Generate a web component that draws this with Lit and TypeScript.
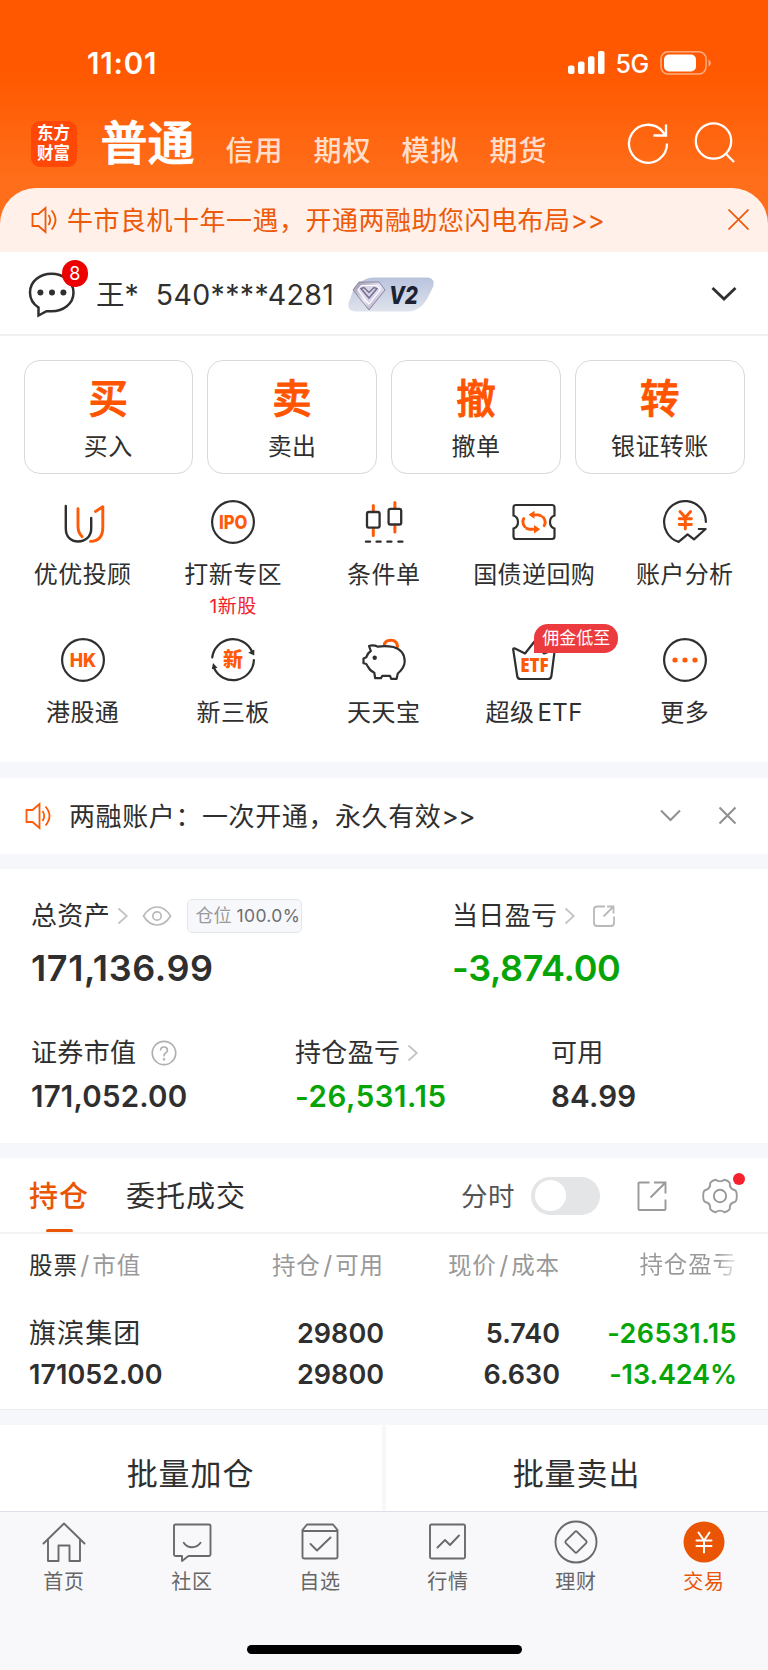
import { LitElement, html, css, svg } from "lit";
import { customElement, property, state } from "lit/decorators.js";
import { classMap } from "lit/directives/class-map.js";

const DARK = "#2f2f2f";
const ORANGE = "#ff5a08";

const glyphs: Record<string, unknown> = {
  youyou: svg`
    <g fill="none" stroke-width="2.4" stroke-linecap="round">
      <path stroke=${DARK} d="M4.8 6V28.5C4.8 37 10 41.500 17 41.500S30.200 37 30.200 28.500V18"/>
      <path stroke=${ORANGE} stroke-width="2.900" d="M17 8.600V26.500Q17 32.500 21 36.600"/>
      <path stroke=${ORANGE} stroke-width="2.900" stroke-linejoin="round" d="M34.500 11.500L41.800 6.800V27.500Q41.800 40.800 29.500 41.400"/>
    </g>`,
  ipo: svg`
    <circle cx="22" cy="22" r="20.9" fill="none" stroke=${DARK} stroke-width="2.200"/>
    <text class="g" x="22.200" y="28.800" font-size="18.500" font-weight="800" textLength="28.500" lengthAdjust="spacingAndGlyphs">IPO</text>`,
  candles: svg`
    <g fill="none" stroke-linecap="round">
      <path stroke=${ORANGE} stroke-width="3" d="M11.300 5.500V11M11.300 29.500V35.500M32.900 2.500V8M32.900 26.500V32"/>
      <rect x="5" y="12" width="12.600" height="15.600" rx="1.800" stroke=${DARK} stroke-width="2.300"/>
      <rect x="26.600" y="8.900" width="12.600" height="15.600" rx="1.800" stroke=${DARK} stroke-width="2.300"/>
      <path stroke=${DARK} stroke-width="2.400" d="M4 41.600h4M14.600 41.600h4M25.400 41.600h4M36.400 41.600h4"/>
    </g>`,
  ticket: svg`
    <path fill="none" stroke=${DARK} stroke-width="2.200" d="M4 5H40Q42.500 5 42.500 7.500V15.500Q38 17 38 22T42.500 28.500V36.500Q42.500 39 40 39H4Q1.500 39 1.500 36.500V28.500Q6 27 6 22T1.500 15.500V7.500Q1.500 5 4 5Z"/>
    <g fill="none" stroke=${ORANGE} stroke-width="2.900" stroke-linecap="round">
      <path d="M12.600 26.500Q9.600 22 11.800 18.600M21 29.300H17.500L14.600 28.300M31.400 17.500Q34.600 22 32.200 25.600M22 14.900H26.500L29.300 16"/>
    </g>
    <path fill=${ORANGE} d="M22.500 10.800V18.800L16.500 14.800ZM22 25V33.400L28.200 29.200Z"/>`,
  yuan: svg`
    <path fill="none" stroke=${DARK} stroke-width="2.200" stroke-linecap="round" stroke-linejoin="round" d="M42.900 22A20.900 20.900 0 1 0 15.600 41.900L24.600 34.300L31 39.400L42.600 29H35.800"/>
    <path fill="none" stroke=${ORANGE} stroke-width="2.900" stroke-linecap="round" d="M17 11.500L22.300 17.500L27.600 11.500M16.200 18.700H28.400M16.200 24.500H28.400M22.300 18V29"/>`,
  hk: svg`
    <circle cx="22" cy="22" r="20.900" fill="none" stroke=${DARK} stroke-width="2.200"/>
    <text class="g" x="22" y="28.600" font-size="18.500" font-weight="800" textLength="26.500" lengthAdjust="spacingAndGlyphs">HK</text>`,
  xin: svg`
    <path fill="none" stroke=${DARK} stroke-width="2.200" stroke-linecap="round" d="M1.200 19.500A20.900 20.900 0 0 1 41 13.500M42.900 22A20.900 20.900 0 0 1 2.800 29.500"/>
    <path fill=${DARK} d="M43.300 11.500V17.500L37.200 14.800ZM.8 31.300L2 25L6.500 29.800Z"/>
    <text class="g" x="22" y="29.400" font-size="20" font-weight="800">新</text>`,
  pig: svg`
    <path fill="none" stroke=${ORANGE} stroke-width="3" stroke-linecap="round" d="M22.300 7.500Q22.600 2.200 28.800 2.200T35.600 8.500"/>
    <path fill="#fff" stroke=${DARK} stroke-width="2.200" stroke-linejoin="round" d="M7 8Q11 6.500 16 8.700Q23 7.500 31.500 9Q42.500 12 42.700 23.500Q42.500 30 35.800 35.500L34.600 40.800H29.200L28 37.800H20.300L19 40.200H13.200L12.300 34.700Q8 33 6 28.800L4.300 26L1.500 25.300V20.600L4.300 19.200Q5.500 15 8.800 13Z"/>
    <circle cx="12.700" cy="19.700" r="2.200" fill=${DARK}/>`,
  etf: svg`
    <path fill="none" stroke=${DARK} stroke-width="2.200" stroke-linejoin="round" d="M1.200 11.500L5.200 38Q5.600 41 8.500 41H36Q39 41 39.400 38L42.800 11.500L32 15.500L22.500 3.500L13 15.500L3 10.500Q1 9.800 1.200 11.500Z"/>
    <text class="g narrow" x="22.400" y="33.500" font-size="19.500" font-weight="800" textLength="28.500" lengthAdjust="spacingAndGlyphs">ETF</text>`,
  more: svg`
    <circle cx="22" cy="22" r="20.900" fill="none" stroke=${DARK} stroke-width="2.200"/>
    <g fill=${ORANGE}><circle cx="12" cy="22" r="2.600"/><circle cx="22" cy="22" r="2.600"/><circle cx="32" cy="22" r="2.600"/></g>`,
};

const tabGlyphs: Record<string, unknown> = {
  home: svg`<path d="M1.500 23.500L22 3.500L42.500 23.500M6 20V41H16.500V25.500H27.500V41H38V20"/>`,
  community: svg`<path d="M5.500 4.500H39Q40.500 4.500 40.500 6V34.500Q40.500 36 39 36H18.500L12 41V36H5.500Q4 36 4 34.500V6Q4 4.500 5.500 4.500ZM13.800 22.800Q16.500 27.300 22 27.300T30.500 22.800"/>`,
  watch: svg`<path d="M9 4.500H35L39.500 10V37Q39.500 38.500 38 38.500H6Q4.500 38.500 4.500 37V10ZM4.500 11H39.500M12.500 24L19 30.500L32.500 17.500"/>`,
  market: svg`<path d="M5.500 4.500H37.500Q39 4.500 39 6V37Q39 38.500 37.500 38.500H5.500Q4 38.500 4 37V6Q4 4.500 5.500 4.500ZM11.500 27.500L19 20L24 25L33 15.500"/>`,
  wealth: svg`<circle cx="22" cy="22" r="20.500"/><path d="M20.900 11.800Q22 10.800 23.100 11.800L32.200 20.900Q33.200 22 32.200 23.100L23.100 32.200Q22 33.200 20.900 32.200L11.800 23.100Q10.800 22 11.800 20.900Z"/>`,
  trade: svg`<circle cx="22" cy="22" r="20.500" fill="#ea5504" stroke="none"/><path stroke="#fff" stroke-width="2" d="M16.500 12.500L22 20.500L27.500 12.500M14.500 20.500H29.500M14.500 26H29.500M22 20.500V32.500"/>`,
};

const speaker = (color: string) => html`
  <svg class="speaker" width="27" height="28" viewBox="0 0 27 28" fill="none" stroke=${color} stroke-width="1.800">
    <path d="M1.500 8H7.500L14.500 2V26L7.500 20H1.500ZM17.500 9Q21 14 17.500 19M20.500 4.500Q28.500 14 20.500 23.500"/>
  </svg>`;

const smallArrow = html`
  <svg class="arrow" width="12" height="18" viewBox="0 0 12 18" fill="none" stroke="#c2c2c2" stroke-width="1.700"><path d="M1.500 1.500L9.800 9L1.500 16.500"/></svg>`;

@customElement("grid-entry")
export class GridEntry extends LitElement {
  @property() icon = "";
  @property() label = "";
  @property() note = "";
  @property() badge = "";

  static styles = css`
    :host { display: flex; flex-direction: column; align-items: center; }
    .pic { position: relative; height: 44px; }
    svg { display: block; overflow: visible; }
    .g { fill: #ff5a08; text-anchor: middle; font-family: Inter, "Noto Sans CJK SC", sans-serif; }
    .g.narrow { font-family: "Open Sans", sans-serif; }
    .label { margin-top: 16px; height: 30px; line-height: 30px; font-size: 24px; letter-spacing: 0.4px; word-spacing: -4px; white-space: nowrap; }
    .note { height: 24px; line-height: 24px; margin-top: 5px; font-size: 19px; color: #f2222c; letter-spacing: 0.6px; }
    .badge { position: absolute; left: 22px; top: -14px; width: 84px; height: 28.500px; line-height: 28px; border-radius: 14px 14px 14px 0; background: #ec3b3f; color: #fff; font-size: 17px; text-align: center; white-space: nowrap; }
  `;

  render() {
    return html`
      <div class="pic">
        <svg width="44" height="44" viewBox="0 0 44 44">${glyphs[this.icon]}</svg>
        ${this.badge ? html`<div class="badge">${this.badge}</div>` : ""}
      </div>
      <div class="label">${this.label}</div>
      ${this.note ? html`<div class="note">${this.note}</div>` : ""}
    `;
  }
}

@customElement("app-root")
export class AppRoot extends LitElement {
  @state() private market = "普通";
  @state() private tab = "持仓";
  @state() private nav = "交易";

  private actions = [["买", "买入"], ["卖", "卖出"], ["撤", "撤单"], ["转", "银证转账"]];
  private entries = [
    [
      { icon: "youyou", label: "优优投顾" },
      { icon: "ipo", label: "打新专区", note: "1新股" },
      { icon: "candles", label: "条件单" },
      { icon: "ticket", label: "国债逆回购" },
      { icon: "yuan", label: "账户分析" },
    ],
    [
      { icon: "hk", label: "港股通" },
      { icon: "xin", label: "新三板" },
      { icon: "pig", label: "天天宝" },
      { icon: "etf", label: "超级 ETF", badge: "佣金低至" },
      { icon: "more", label: "更多" },
    ],
  ] as { icon: string; label: string; note?: string; badge?: string }[][];
  private navItems = [
    ["home", "首页"], ["community", "社区"], ["watch", "自选"],
    ["market", "行情"], ["wealth", "理财"], ["trade", "交易"],
  ];

  static styles = css`
    :host { display: block; width: 768px; height: 1670px; overflow: hidden; background: #fff; color: #2f2f2f; font-family: Inter, "Noto Sans CJK SC", sans-serif; }
    * { box-sizing: border-box; }
    svg { display: block; flex: none; }
    .top { height: 252px; background: linear-gradient(#ff5800 0, #ff5800 70px, #ff6e1a 180px); display: flex; flex-direction: column; }
    .status { height: 74px; padding: 51px 57px 0 87px; display: flex; justify-content: space-between; align-items: flex-start; color: #fff; }
    .time { font-size: 29.500px; font-weight: 600; line-height: 24px; letter-spacing: 0.800px; }
    .signals { display: flex; height: 24px; align-items: center; }
    .net { font-size: 25px; font-weight: 500; line-height: 24px; margin: 1px 11px 0 10px; letter-spacing: -0.3px; }
    .markets { height: 114px; padding: 0 33px 0 30.500px; display: flex; align-items: center; color: #fff; }
    .logo { width: 46px; height: 46px; border-radius: 9px; background: #ff4708; font-family: "Liberation Sans", "Noto Sans CJK SC", sans-serif; font-weight: 700; font-size: 16.500px; line-height: 20px; text-align: center; padding-top: 2px; align-self: flex-start; margin-top: 46.500px; flex: none; }
    .market { font-size: 28px; line-height: 36px; letter-spacing: 1px; font-weight: 500; color: rgba(255, 255, 255, 0.8); margin: 40px 0 0 30px; }
    .market.on { font-size: 47px; line-height: 56px; letter-spacing: 0; font-weight: 500; -webkit-text-stroke: 0.9px #fff; color: #fff; margin: 23px 1px 0 24px; }
    .tools { margin: 24px 0 0 auto; display: flex; gap: 25px; }
    .promo { flex: 1; background: #fff1ea; border-radius: 36px 36px 0 0; display: flex; align-items: center; padding: 0 19px 0 31px; color: #ec5a0a; font-size: 26px; letter-spacing: 0.500px; }
    .promo .close { margin-left: auto; margin-bottom: 1px; }
    .words { line-height: 36px; font-family: "Noto Sans CJK SC", sans-serif; }
    .words b { font-family: Inter, sans-serif; font-weight: 400; letter-spacing: -0.300px; }
    .promo .words { margin-left: 9px; }
    .account { height: 84px; border-bottom: 2px solid #f0f0f0; display: flex; align-items: center; padding: 3px 31px 0 28px; }
    .chat { position: relative; width: 48px; height: 48px; }
    .count { position: absolute; left: 33.500px; top: -10.500px; width: 26.500px; height: 26.500px; border-radius: 50%; background: #ec0000; color: #fff; font-size: 18px; line-height: 27px; text-align: center; }
    .who { margin-left: 20px; font-size: 28.500px; line-height: 40px; white-space: pre; }
    .number { margin-left: 17px; font-size: 28.500px; letter-spacing: 0.350px; line-height: 40px; }
    .vip { margin-left: 13.500px; }
    .vip text { font: italic 800 25px Inter, sans-serif; fill: #1c2233; }
    .down { margin-left: auto; margin-bottom: 2px; }
    .actions { display: grid; grid-template-columns: repeat(4, 1fr); gap: 14.500px; padding: 23.500px 23.500px 0; }
    .action { height: 114px; border: 1.500px solid #d9d9d9; border-radius: 16px; display: flex; flex-direction: column; align-items: center; }
    .big { font-size: 39.500px; font-weight: 500; -webkit-text-stroke: 0.9px #ff5500; color: #ff5500; line-height: 50px; margin-top: 13.500px; }
    .cap { font-size: 24px; line-height: 30px; margin-top: 8px; letter-spacing: 0.400px; }
    .grid { display: grid; grid-template-columns: repeat(5, 1fr); padding: 0 8px 0 7.400px; height: 138px; }
    .grid.first { margin-top: 26.500px; }
    .grid.second { height: 124px; }
    .band { height: 15px; background: #f6f7fa; }
    .band.tall { height: 15.500px; }
    .notice { height: 76.500px; display: flex; align-items: center; padding: 0 31px 0 25px; font-size: 26px; letter-spacing: 0.600px; }
    .notice .words { margin-left: 17px; }
    .notice .fold { margin-left: auto; margin-right: 37px; }
    .assets { height: 274px; padding: 30px 31px 0; }
    .pair { display: grid; grid-template-columns: 421px 1fr; }
    .trio { display: grid; grid-template-columns: 264px 256px 1fr; margin-top: 46px; }
    .name { height: 34px; line-height: 34px; font-size: 26px; letter-spacing: 0.350px; display: flex; align-items: center; }
    .name .arrow { margin-left: 6.500px; }
    .eye { margin-left: 13px; }
    .ratio { margin-left: 15.500px; height: 34px; width: 115px; border: 1.500px solid #e4e5ea; border-radius: 5px; background: #f7f8fb; font-size: 18px; letter-spacing: 0; color: #999; display: flex; align-items: center; padding-left: 7.500px; gap: 5px; }
    .ratio b { font-weight: 400; color: #6e6e6e; font-size: 17.500px; letter-spacing: 0.350px; }
    .outlink { margin-left: 17px; }
    .help { margin-left: 15px; }
    .sum { font-size: 36px; font-weight: 600; line-height: 44px; margin-top: 13px; }
    .sum.s1 { letter-spacing: 0.600px; }
    .sum.s2 { letter-spacing: -0.350px; }
    .amount { font-size: 29.500px; font-weight: 600; line-height: 36px; margin-top: 7.500px; letter-spacing: 0.200px; }
    .amount.green { letter-spacing: 0.550px; }
    .green { color: #06a406; }
    .tabs { height: 76px; border-bottom: 2px solid #f3f3f5; padding: 0 30px 0 29px; display: flex; align-items: stretch; }
    .tab { font-size: 29px; letter-spacing: 1px; line-height: 40px; padding-top: 18.500px; margin-right: 37px; display: flex; flex-direction: column; align-items: center; }
    .tab.on { color: #ea5504; font-weight: 500; }
    .tab.on::after { content: ""; width: 27px; height: 5.500px; border-radius: 2px 2px 1px 1px; background: #ea5504; margin-top: 12px; }
    .controls { margin-left: auto; display: flex; align-items: center; padding-top: 1px; }
    .controls .time-label { font-size: 26.500px; color: #555; line-height: 36px; letter-spacing: 0.500px; margin-right: 16px; }
    .switch { width: 69px; height: 38px; border-radius: 19px; background: #e4e5e7; padding: 3.500px 4px; margin-right: 37px; }
    .knob { width: 31px; height: 31px; border-radius: 50%; background: #fff; }
    .gear { position: relative; margin-left: 35px; }
    .dot { position: absolute; right: -7px; top: -5px; width: 12px; height: 12px; border-radius: 50%; background: #f5222d; }
    .cols { display: grid; grid-template-columns: 181px 174px 176px 177px; align-content: start; text-align: right; padding: 0 31px 0 29px; }
    .head { height: 30px; margin-top: 16px; line-height: 30px; font-size: 23.500px; letter-spacing: 0.900px; color: #999; }
    .head i { font-style: normal; font-size: 25px; margin: 0 2px 0 2.500px; }
    .head em { font-style: normal; color: #2f2f2f; }
    .left { text-align: left; }
    .fade { background: linear-gradient(90deg, #999 80%, #eee 100%); -webkit-background-clip: text; background-clip: text; color: transparent; }
    .rows { margin-top: 33px; height: 96px; font-size: 27px; font-weight: 600; line-height: 41px; }
    .rows .stock { font-size: 27px; font-weight: 400; letter-spacing: 1.100px; }
    .rows .loose { letter-spacing: 0.400px; }
    .rows .tight { letter-spacing: -0.100px; }
    .band.lined { border-top: 1.500px solid #ececef; height: 16px; }
    .batch { display: grid; grid-template-columns: 1fr 1fr; gap: 4px; background: #f8f8fa; height: 86px; }
    .batch div { background: #fff; display: flex; align-items: center; justify-content: center; font-size: 31px; letter-spacing: 0.900px; padding: 7px 1px 0 0; }
    .nav { height: 159px; background: #f8f8fb; border-top: 1.500px solid #dedfe9; }
    .items { display: grid; grid-template-columns: repeat(6, 1fr); padding-top: 8px; }
    .item { display: flex; flex-direction: column; align-items: center; color: #666; font-size: 20px; letter-spacing: 0.700px; line-height: 26px; gap: 5px; }
    .item svg { stroke: #6a6a6a; stroke-width: 1.900; fill: none; stroke-linejoin: round; stroke-linecap: round; }
    .item.on { color: #ea5504; }
    .home-bar { width: 275px; height: 9.500px; border-radius: 5px; background: #000; margin: 49.500px auto 0; }
  `;

  render() {
    return html`
      <header class="top">
        <div class="status">
          <span class="time">11:01</span>
          <div class="signals">
            <svg width="37" height="24" viewBox="0 0 37 24" fill="#fff"><rect x="0" y="14.500" width="6.500" height="8.500" rx="2"/><rect x="10" y="10.500" width="6.500" height="12.500" rx="2"/><rect x="20" y="5.300" width="6.500" height="17.700" rx="2"/><rect x="30" y="0" width="6.500" height="23" rx="2"/></svg>
            <span class="net">5G</span>
            <svg width="51" height="24" viewBox="0 0 51 24"><rect x="1" y=".8" width="45" height="22.200" rx="7" fill="none" stroke="#fff" stroke-opacity=".5" stroke-width="1.500"/><rect x="4" y="3.500" width="32" height="17" rx="5" fill="#fff"/><path d="M48.500 8.500Q51 10 51 12T48.500 15.500Z" fill="#fff" fill-opacity=".5"/></svg>
          </div>
        </div>
        <div class="markets">
          <div class="logo">东方<br>财富</div>
          ${["普通", "信用", "期权", "模拟", "期货"].map(
            (m) => html`<div class=${classMap({ market: true, on: m === this.market })} @click=${() => (this.market = m)}>${m}</div>`,
          )}
          <div class="tools">
            <svg width="42" height="42" viewBox="0 0 42 42" fill="none" stroke="#fff" stroke-width="2.300"><path d="M40 21.500A19 19 0 1 1 35.500 9.500L38.800 13.800M39 2.500V13.500H26.500"/></svg>
            <svg width="41" height="42" viewBox="0 0 41 42" fill="none" stroke="#fff" stroke-width="2.300"><circle cx="19.500" cy="19" r="17.700"/><path d="M31.800 31.800L40 40"/></svg>
          </div>
        </div>
        <div class="promo">
          ${speaker("#ec5a0a")}
          <span class="words" lang="zh-CN">牛市良机十年一遇，开通两融助您闪电布局<b>&gt;&gt;</b></span>
          <svg class="close" width="21" height="21" viewBox="0 0 21 21" stroke="#ec5a0a" stroke-width="1.700"><path d="M.5 .5L20.500 20.500M20.500 .5L.5 20.500"/></svg>
        </div>
      </header>

      <section class="account">
        <div class="chat">
          <svg width="48" height="48" viewBox="0 0 48 48"><path fill="none" stroke="#2f2f2f" stroke-width="2.500" stroke-linejoin="miter" d="M10.500 44.500V36.500Q2 31 2 21.500C2 10 12.500 2.800 23.500 2.800S45.500 10 45.500 21.500S35 40.200 23.500 40.200H18.500Z"/><g fill="#2f2f2f"><circle cx="12.400" cy="21.600" r="3"/><circle cx="24" cy="21.600" r="3"/><circle cx="35.400" cy="21.600" r="3"/></g></svg>
          <span class="count">8</span>
        </div>
        <span class="who">王*</span><span class="number">540****4281</span>
        <svg class="vip" width="86" height="36" viewBox="0 0 86 36">
          <defs>
            <linearGradient id="vipBg" x1="0" y1="0" x2="0" y2="1"><stop offset="0" stop-color="#b9c3dd"/><stop offset="1" stop-color="#dfe3ec"/></linearGradient>
            <linearGradient id="gem" x1="0" y1="0" x2="1" y2="1"><stop offset="0" stop-color="#8f8aa3"/><stop offset=".5" stop-color="#eeeafa"/><stop offset="1" stop-color="#8a83a0"/></linearGradient>
          </defs>
          <path fill="url(#vipBg)" d="M26 .5H78Q88 .5 85 10L79 22Q72 34.500 60 34.500H8Q-1 34.500 .5 26L5 14Q12 1 26 .5Z"/>
          <path fill="url(#gem)" stroke="#8d88a2" stroke-width="1" d="M11 5H31L37 13L21 33L5 13Z"/>
          <path fill="#d9d5ea" stroke="#fff" stroke-width="1.200" d="M13.500 8.500H28.500L32 13L21 27L10 13Z"/>
          <path fill="none" stroke="#77728f" stroke-width="1.500" d="M13 11.500L16 10.500L21 15.500L26 10.500L29 11.500L21 21Z"/>
          <text x="41" y="26.500" textLength="29" lengthAdjust="spacingAndGlyphs">V2</text>
        </svg>
        <svg class="down" width="26" height="16" viewBox="0 0 26 16" fill="none" stroke="#2f2f2f" stroke-width="2.800"><path d="M1.500 2L13 13L24.500 2"/></svg>
      </section>

      <section class="actions">
        ${this.actions.map(([big, cap]) => html`<div class="action"><span class="big">${big}</span><span class="cap">${cap}</span></div>`)}
      </section>
      ${this.entries.map(
        (row, i) => html`
          <section class=${classMap({ grid: true, first: i === 0, second: i === 1 })}>
            ${row.map((e) => html`<grid-entry icon=${e.icon} label=${e.label} note=${e.note ?? ""} badge=${e.badge ?? ""}></grid-entry>`)}
          </section>`,
      )}

      <div class="band tall"></div>
      <section class="notice">
        ${speaker("#ff5a08")}
        <span class="words" lang="zh-CN">两融账户：一次开通，永久有效<b>&gt;&gt;</b></span>
        <svg class="fold" width="21" height="13" viewBox="0 0 21 13" fill="none" stroke="#8f8f8f" stroke-width="2"><path d="M1 1.500L10.500 11L20 1.500"/></svg>
        <svg width="19" height="19" viewBox="0 0 19 19" stroke="#8f8f8f" stroke-width="2"><path d="M1.500 1.500L17.500 17.500M17.500 1.500L1.500 17.500"/></svg>
      </section>
      <div class="band"></div>

      <section class="assets">
        <div class="pair">
          <div>
            <div class="name">
              总资产${smallArrow}
              <svg class="eye" width="30" height="22" viewBox="0 0 30 22" fill="none" stroke="#b9b9b9" stroke-width="1.700"><path d="M1.500 11Q7 2 15 2T28.500 11Q23 20 15 20T1.500 11Z"/><circle cx="15" cy="11" r="4.200"/></svg>
              <span class="ratio">仓位<b>100.0%</b></span>
            </div>
            <div class="sum s1">171,136.99</div>
          </div>
          <div>
            <div class="name">
              当日盈亏${smallArrow}
              <svg class="outlink" width="22" height="22" viewBox="0 0 22 22" fill="none" stroke="#b9b9b9" stroke-width="1.800"><path d="M12 1.500H4Q1 1.500 1 4.500V18Q1 21 4 21H18Q21 21 21 18V11.500M14 1.500H20.500V8.500M20.500 1.500L10.500 11.500"/></svg>
            </div>
            <div class="sum s2 green">-3,874.00</div>
          </div>
        </div>
        <div class="trio">
          <div>
            <div class="name">
              证券市值
              <svg class="help" width="26" height="26" viewBox="0 0 26 26" fill="none" stroke="#b0b0b0" stroke-width="1.700"><circle cx="13" cy="13" r="11.700"/><path d="M9.600 10.500Q9.600 7 13 7T16.400 10.200Q16.400 12 14.500 13.200T13 16.500"/><circle cx="13" cy="19.300" r=".5"/></svg>
            </div>
            <div class="amount">171,052.00</div>
          </div>
          <div>
            <div class="name">持仓盈亏${smallArrow}</div>
            <div class="amount green">-26,531.15</div>
          </div>
          <div>
            <div class="name">可用</div>
            <div class="amount">84.99</div>
          </div>
        </div>
      </section>
      <div class="band"></div>

      <section class="tabs">
        ${["持仓", "委托成交"].map(
          (t) => html`<div class=${classMap({ tab: true, on: t === this.tab })} @click=${() => (this.tab = t)}>${t}</div>`,
        )}
        <div class="controls">
          <span class="time-label">分时</span>
          <div class="switch"><div class="knob"></div></div>
          <svg width="30" height="30" viewBox="0 0 30 30" fill="none" stroke="#999" stroke-width="1.900"><path d="M12.500 1.500H2.500Q1.500 1.500 1.500 2.500V28Q1.500 29 2.500 29H27.500Q28.500 29 28.500 28V18.500M17 1.500H28.500V12.500M28.500 1.500L13.500 16.500"/></svg>
          <div class="gear">
            <svg width="36" height="36" viewBox="0 0 36 36" fill="none" stroke="#999" stroke-width="1.900" stroke-linejoin="round"><circle cx="18" cy="18" r="6.200"/><path d="M13.600 1.800Q18 5 22.400 1.800Q26 2.300 27.800 5Q27.300 11 32.500 12Q34.800 12.500 34.800 18T32.500 24Q27.300 25 27.800 31Q26 33.700 22.400 34.200Q18 31 13.600 34.200Q10 33.700 8.200 31Q8.700 25 3.500 24Q1.200 23.500 1.200 18T3.500 12Q8.700 11 8.200 5Q10 2.300 13.600 1.800Z"/></svg>
            <span class="dot"></span>
          </div>
        </div>
      </section>

      <div class="cols head">
        <span class="left"><em>股票</em><i>/</i>市值</span><span>持仓<i>/</i>可用</span><span>现价<i>/</i>成本</span><span><span class="fade">持仓盈亏</span></span>
      </div>
      <div class="cols rows">
        <span class="stock left">旗滨集团</span><span>29800</span><span>5.740</span><span class="green loose">-26531.15</span>
        <span class="left">171052.00</span><span>29800</span><span>6.630</span><span class="green tight">-13.424%</span>
      </div>
      <div class="band lined"></div>
      <section class="batch"><div>批量加仓</div><div>批量卖出</div></section>

      <nav class="nav">
        <div class="items">
          ${this.navItems.map(
            ([icon, label]) => html`
              <div class=${classMap({ item: true, on: label === this.nav })} @click=${() => (this.nav = label)}>
                <svg width="44" height="44" viewBox="0 0 44 44">${tabGlyphs[icon]}</svg>
                <span>${label}</span>
              </div>`,
          )}
        </div>
        <div class="home-bar"></div>
      </nav>
    `;
  }
}
